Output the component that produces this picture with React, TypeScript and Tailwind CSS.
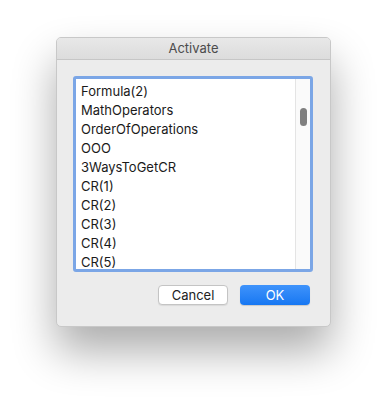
export default function App() {
    const items = [
        "Formula(2)",
        "MathOperators",
        "OrderOfOperations",
        "OOO",
        "3WaysToGetCR",
        "CR(1)",
        "CR(2)",
        "CR(3)",
        "CR(4)",
        "CR(5)",
    ];

    return (
        <div
            className="w-[387px] h-[401px] bg-white pl-[56px] pt-[37px] overflow-hidden"
            style={{ fontFamily: 'Inter, "Liberation Sans", sans-serif' }}
        >
            {/* dialog window */}
            <div className="w-[275px] h-[290px] rounded-[5px] bg-[#ececec] border border-[#c8c8c8] shadow-[0_24px_44px_rgba(0,0,0,0.33)] flex flex-col overflow-hidden">
                <div className="h-[22px] shrink-0 bg-gradient-to-b from-[#e8e8e8] to-[#dcdcdc] border-b border-[#c6c6c6] flex items-center justify-center text-[13px] text-[#4c4c4c]">
                    Activate
                </div>

                <div className="flex flex-col pl-[16px] pr-[19px] pt-[16px]">
                    {/* list box with focus ring */}
                    <div className="w-[240px] h-[196px] rounded-[3px] border-[3px] border-[#7ba6e6] bg-white flex">
                        <div className="flex-1 flex flex-col pl-[5px] pt-[3px] text-[13px] text-[#1a1a1a] leading-[19px]">
                            {items.map((item) => (
                                <div key={item}>{item}</div>
                            ))}
                        </div>
                        <div className="w-[15px] border-l border-[#e4e4e4] bg-[#fafafa] flex justify-center pt-[29px]">
                            <div className="w-[7px] h-[18px] rounded-full bg-[#7f7f7f]" />
                        </div>
                    </div>

                    {/* buttons */}
                    <div className="flex justify-end gap-[12px] mt-[13px] pr-[1px]">
                        <button className="w-[70px] h-[20px] rounded-[4px] bg-white border border-[#c4c4c4] shadow-[0_1px_1px_rgba(0,0,0,0.08)] text-[13px] text-[#222] leading-none">
                            Cancel
                        </button>
                        <button className="w-[70px] h-[20px] rounded-[4px] bg-gradient-to-b from-[#3e93fb] to-[#1577f2] text-[13px] text-white leading-none shadow-[0_1px_1px_rgba(0,0,0,0.15)]">
                            OK
                        </button>
                    </div>
                </div>
            </div>
        </div>
    );
}
